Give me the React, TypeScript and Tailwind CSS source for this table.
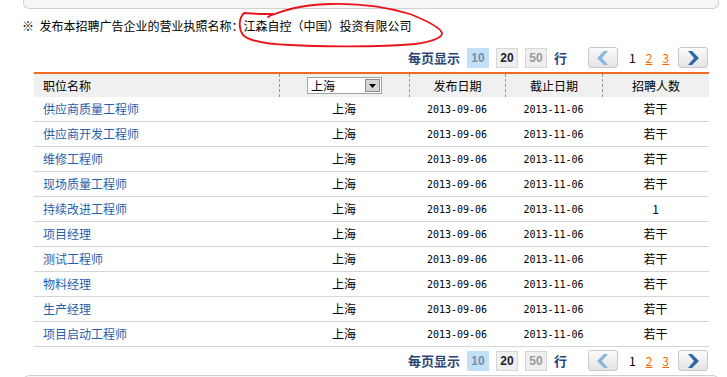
import React from "react";

const jobs = [
  { name: "供应商质量工程师", num: "若干" },
  { name: "供应商开发工程师", num: "若干" },
  { name: "维修工程师", num: "若干" },
  { name: "现场质量工程师", num: "若干" },
  { name: "持续改进工程师", num: "1" },
  { name: "项目经理", num: "若干" },
  { name: "测试工程师", num: "若干" },
  { name: "物料经理", num: "若干" },
  { name: "生产经理", num: "若干" },
  { name: "项目启动工程师", num: "若干" },
];

const cjk = "font-['Noto_Sans_CJK_SC',sans-serif]";

function Chevron({ dir, color }: { dir: "left" | "right"; color: string }) {
  return (
    <svg width="11" height="14" viewBox="0 0 11 14">
      {dir === "left" ? (
        <polygon points="7,0 11,0 5,7 11,14 7,14 0,7" fill={color} />
      ) : (
        <polygon points="0,0 4,0 11,7 4,14 0,14 6,7" fill={color} />
      )}
    </svg>
  );
}

function Pager() {
  const btn =
    "w-[30px] h-[21px] flex items-center justify-center rounded-[3px] border border-[#c9c9c9] bg-gradient-to-b from-[#fbfbfb] to-[#e4e4e4]";
  const size =
    "ml-[7px] w-[22px] h-[20px] flex items-center justify-center border text-[12px] font-bold font-['Liberation_Sans',sans-serif]";
  return (
    <div className="ml-[34px] w-[675px] h-[21px] flex items-center justify-end pr-[1px]">
      <span className="text-[13px] font-bold text-[#2b4675] leading-none">每页显示</span>
      <span className={`${size} bg-[#c3e0fa] border-[#c3e0fa] text-[#7b8da3]`}>10</span>
      <span className={`${size} bg-[#efefef] border-[#d6d6d6] text-[#222]`}>20</span>
      <span className={`${size} bg-[#efefef] border-[#d6d6d6] text-[#9a9a9a]`}>50</span>
      <span className="ml-[7px] text-[13px] font-bold text-[#2b4675] leading-none">行</span>
      <span className={`ml-[21px] ${btn}`}>
        <Chevron dir="left" color="#8db6dc" />
      </span>
      <span className="ml-[11px] text-[12px] text-black leading-none">1</span>
      <span className="ml-[10px] text-[12px] text-[#f60] underline leading-none">2</span>
      <span className="ml-[10px] text-[12px] text-[#f60] underline leading-none">3</span>
      <span className={`ml-[9px] ${btn}`}>
        <Chevron dir="right" color="#2f69a7" />
      </span>
    </div>
  );
}

export default function App() {
  const cols = "grid grid-cols-[245px_130px_96px_97px_107px]";
  const dash = "border-l border-dashed border-[#9a9a9a]";
  return (
    <div className={`relative w-[727px] h-[377px] overflow-hidden bg-white text-black ${cjk}`}>
      <div className="ml-[23px] w-[696px] h-[9px] border border-t-0 border-[#d0d0d0] rounded-b-[6px] bg-[#f6f6f6]" />

      <div className="h-[34px] pl-[22px] flex items-center text-[12px] leading-[14px]">
        <span>※&nbsp;&nbsp;发布本招聘广告企业的营业执照名称：江森自控（中国）投资有限公司</span>
      </div>

      <div className="pt-[4px] pb-[4px]">
        <Pager />
      </div>

      <div className="ml-[34px] w-[675px] text-[12px]">
        <div className={`${cols} h-[25px] border-t-2 border-[#f26a1b] bg-[#f0f0f0]`}>
          <div className="pl-[9px] flex items-center">职位名称</div>
          <div className={`${dash} flex items-center justify-center`}>
            <div className="w-[75px] h-[17px] border border-[#a3a3a3] bg-white flex items-center justify-between">
              <span className="pl-[3px] leading-none">上海</span>
              <span className="w-[15px] h-[13px] mr-[1px] bg-[#d6d6d6] border border-[#8a8a8a] flex items-center justify-center">
                <svg width="7" height="4" viewBox="0 0 7 4">
                  <polygon points="0,0 7,0 3.5,4" fill="#000" />
                </svg>
              </span>
            </div>
          </div>
          <div className={`${dash} flex items-center justify-center`}>发布日期</div>
          <div className={`${dash} flex items-center justify-center`}>截止日期</div>
          <div className={`${dash} flex items-center justify-center`}>招聘人数</div>
        </div>
        {jobs.map((j) => (
          <div key={j.name} className={`${cols} h-[25px] border-b border-[#d6d6d6]`}>
            <div className="pl-[9px] flex items-center text-[#1f5fab]">{j.name}</div>
            <div className="flex items-center justify-center">上海</div>
            <div className="flex items-center justify-center font-['DejaVu_Sans_Mono',monospace] text-[10px]">
              2013-09-06
            </div>
            <div className="flex items-center justify-center font-['DejaVu_Sans_Mono',monospace] text-[10px]">
              2013-11-06
            </div>
            <div className="flex items-center justify-center">{j.num}</div>
          </div>
        ))}
      </div>

      <div className="pt-[3px]">
        <Pager />
      </div>

      <div className="mt-[4px] ml-[23px] w-[696px] h-[10px] border border-b-0 border-[#d0d0d0] rounded-t-[6px] bg-[#f6f6f6]" />

      {/* hand-drawn red annotation */}
      <svg className="absolute left-0 top-0 pointer-events-none" width="727" height="377">
        <path
          d="M 272 15 C 285 10, 300 5, 330 4 C 360 3, 390 8, 410 14 C 425 20, 440 27, 442 33 C 443 38, 430 42, 415 44 C 380 47, 320 47, 290 45 C 265 44, 248 40, 243 35 C 238 28, 239 18, 244 13 L 260 14 L 273 14 L 268 17"
          fill="none"
          stroke="#e8141a"
          strokeWidth="1.8"
          strokeLinecap="round"
          strokeLinejoin="round"
        />
      </svg>
    </div>
  );
}
